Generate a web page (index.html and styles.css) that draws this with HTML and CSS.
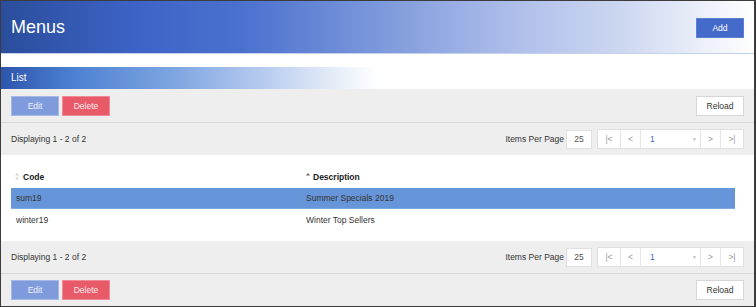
FILE: index.html
```html
<!DOCTYPE html>
<html lang="en">
<head>
    <meta charset="UTF-8">
    <meta name="viewport" content="width=device-width, initial-scale=1.0">
    <title>Menus</title>
    <link rel="stylesheet" href="styles.css">
</head>
<body>

<div class="frame">
    <div class="page-header">
        <h1>Menus</h1>
        <button class="btn btn-primary">Add</button>
    </div>

    <div class="list-bar">List</div>

    <div class="toolbar">
        <div class="btn-group">
            <button class="btn btn-edit">Edit</button>
            <button class="btn btn-delete">Delete</button>
        </div>
        <button class="btn btn-plain">Reload</button>
    </div>

    <div class="pager">
        <span>Displaying 1 - 2 of 2</span>
        <div class="pager-right">
            <span>Items Per Page</span>
            <span class="page-size">25</span>
            <div class="pages">
                <span class="seg seg-first">|&lt;</span>
                <span class="seg seg-prev">&lt;</span>
                <span class="seg seg-select">1<span class="caret">&#9660;</span></span>
                <span class="seg seg-next">&gt;</span>
                <span class="seg seg-last">&gt;|</span>
            </div>
        </div>
    </div>

    <div class="grid">
        <div class="grid-head">
            <div class="col col-code">
                <svg class="sort" width="4" height="7" viewBox="0 0 4 7"><path d="M2 0 L4 2.5 H0 Z M2 7 L4 4.5 H0 Z" fill="#d4d4d4"/></svg>
                Code
            </div>
            <div class="col col-desc">
                <svg class="sort" width="4" height="7" viewBox="0 0 4 7"><path d="M2 0 L4 2.5 H0 Z" fill="#666"/></svg>
                Description
            </div>
        </div>
        <div class="grid-row selected">
            <div class="col col-code">sum19</div>
            <div class="col col-desc">Summer Specials 2019</div>
        </div>
        <div class="grid-row">
            <div class="col col-code">winter19</div>
            <div class="col col-desc">Winter Top Sellers</div>
        </div>
    </div>

    <div class="pager">
        <span>Displaying 1 - 2 of 2</span>
        <div class="pager-right">
            <span>Items Per Page</span>
            <span class="page-size">25</span>
            <div class="pages">
                <span class="seg seg-first">|&lt;</span>
                <span class="seg seg-prev">&lt;</span>
                <span class="seg seg-select">1<span class="caret">&#9660;</span></span>
                <span class="seg seg-next">&gt;</span>
                <span class="seg seg-last">&gt;|</span>
            </div>
        </div>
    </div>

    <div class="toolbar toolbar-bottom">
        <div class="btn-group">
            <button class="btn btn-edit">Edit</button>
            <button class="btn btn-delete">Delete</button>
        </div>
        <button class="btn btn-plain">Reload</button>
    </div>
</div>

</body>
</html>
```

FILE: styles.css
```css
* {
    margin: 0;
    padding: 0;
    box-sizing: border-box;
    font-family: 'Liberation Sans', Arial, sans-serif;
}

body {
    background: #fff;
}

.frame {
    width: 756px;
    height: 307px;
    border: 1px solid #3c3c3c;
    border-right-width: 2px;
    background: #fff;
    overflow: hidden;
}

.page-header {
    height: 53px;
    padding: 0 10px;
    display: flex;
    align-items: center;
    justify-content: space-between;
    background: linear-gradient(to right, #2a4e9b 0%, #3d63c6 18%, #4b71cf 32%, #7c98db 50%, #aebeea 68%, #cbd6f0 82%, #ffffff 100%);
    border-bottom: 1px solid #c5d2ee;
}

.page-header h1 {
    color: #fff;
    font-size: 18px;
    font-weight: normal;
    padding-top: 1px;
}

.btn {
    height: 20px;
    width: 48px;
    border: 1px solid transparent;
    font-size: 8.5px;
    cursor: pointer;
}

.btn-primary {
    background: #4369c9;
    border-color: #5a7fd6;
    color: #fff;
    margin-top: 2px;
}

.list-bar {
    margin-top: 13px;
    height: 22px;
    padding-left: 10px;
    line-height: 22px;
    font-size: 10px;
    color: #fff;
    background: linear-gradient(to right, #2c55ab 0%, #4f82d3 10%, #7aa3e0 22%, #b3c8ee 34%, #e4ecf8 44%, #ffffff 50%);
}

.toolbar {
    height: 34px;
    padding: 0 10px;
    display: flex;
    align-items: center;
    justify-content: space-between;
    background: #eeeeee;
    border-bottom: 1px solid #d9d9d9;
}

.toolbar-bottom {
    border-bottom: none;
    border-top: 1px solid #d9d9d9;
    height: 33px;
}

.btn-group {
    display: flex;
    gap: 3px;
}

.btn-edit {
    background: #7f9bdb;
    border-color: #a6b9e6;
    color: #eef2fc;
}

.btn-delete {
    background: #e95a69;
    border-color: #f08a95;
    color: #fdecee;
}

.btn-plain {
    background: #fff;
    border-color: #d6d6d6;
    color: #333;
}

.pager {
    height: 32px;
    padding: 0 10px;
    display: flex;
    align-items: center;
    justify-content: space-between;
    background: #eeeeee;
    font-size: 8.5px;
    color: #333;
}

.pager-right {
    display: flex;
    align-items: center;
}

.page-size {
    margin-left: 2px;
    width: 26px;
    height: 19px;
    line-height: 17px;
    text-align: center;
    background: #fff;
    border: 1px solid #e0e0e0;
    color: #555;
}

.pages {
    margin-left: 5px;
    display: flex;
    height: 20px;
    background: #fff;
    border: 1px solid #e0e0e0;
}

.seg {
    height: 18px;
    line-height: 18px;
    color: #999;
    border-left: 1px solid #e6e6e6;
    text-align: center;
}

.seg:first-child {
    border-left: none;
}

.seg-first { width: 22px; }
.seg-prev { width: 20px; }
.seg-next { width: 20px; }
.seg-last { width: 23px; }

.seg-select {
    width: 60px;
    padding-left: 9px;
    text-align: left;
    color: #3d66c5;
    display: flex;
    justify-content: space-between;
    align-items: center;
}

.caret {
    font-size: 5px;
    color: #bbb;
    padding-right: 3px;
}

.grid {
    background: #fff;
    padding: 10px 19px 10px 10px;
    font-size: 8.5px;
    color: #333;
}

.grid-head {
    display: flex;
    height: 23px;
    align-items: center;
    font-weight: bold;
    color: #222;
}

.grid-row {
    display: flex;
    height: 21px;
    align-items: center;
}

.grid-row + .grid-row {
    height: 22px;
}

.grid-row.selected {
    background: #6696d9;
    border-bottom: 1px solid #80a8e2;
}

.col-code {
    width: 290px;
    padding-left: 5px;
}

.col-desc {
    flex: 1;
    padding-left: 5px;
}

.grid-head .col {
    display: flex;
    align-items: center;
    gap: 4px;
}

.grid-head .col-code {
    padding-left: 4px;
}

.grid-head .col-desc {
    padding-left: 5px;
    gap: 3px;
}
```
